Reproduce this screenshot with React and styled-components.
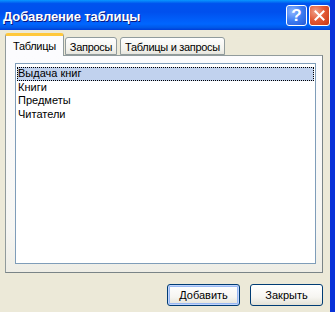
import React from 'react';
import styled, { createGlobalStyle } from 'styled-components';

const Global = createGlobalStyle`
  html, body { margin: 0; padding: 0; background: #ece9d8; }
  body { font-family: "Liberation Sans", Arial, sans-serif; }
`;

const Window = styled.div`
  width: 335px;
  height: 312px;
  display: flex;
  flex-direction: column;
  background: #ece9d8;
  border-right: 5px solid #0831d9;
  box-sizing: border-box;
  overflow: hidden;
`;

const TitleBar = styled.div`
  height: 30px;
  flex: none;
  display: flex;
  align-items: center;
  justify-content: space-between;
  padding: 0 0 0 3px;
  background: linear-gradient(180deg, #0997ff 0%, #0053ee 12%, #0050ee 40%, #0066ff 80%, #0058e8 92%, #003dd7 100%);
`;

const Title = styled.span`
  color: #fff;
  font-family: "Liberation Sans", Arial, sans-serif;
  font-weight: bold;
  font-size: 13px;
  letter-spacing: -0.1px;
  text-shadow: 1px 1px 0 #0a1883;
  margin-top: 2px;
`;

const Caps = styled.div`
  display: flex;
  gap: 2px;
  margin-top: 1px;
`;

const CapButton = styled.div`
  width: 21px;
  height: 21px;
  box-sizing: border-box;
  border: 1px solid #fff;
  border-radius: 3px;
  display: flex;
  align-items: center;
  justify-content: center;
  background: ${p => p.close
    ? 'radial-gradient(circle at 30% 30%, #f0a08a 0%, #e35b37 45%, #c63510 100%)'
    : 'radial-gradient(circle at 30% 30%, #8fb6ff 0%, #3c7cf2 50%, #2457d6 100%)'};
  color: #fff;
  font-family: "Liberation Sans", Arial, sans-serif;
  font-weight: bold;
  font-size: 17px;
  line-height: 1;
`;

const Body = styled.div`
  flex: 1;
  display: flex;
  flex-direction: column;
  padding: 3px 7px 0 5px;
`;

const TabStrip = styled.div`
  display: flex;
  align-items: flex-end;
  height: 22px;
  position: relative;
  z-index: 1;
`;

const Tab = styled.div`
  box-sizing: border-box;
  height: ${p => p.active ? '23px' : '18px'};
  margin-bottom: ${p => p.active ? '-1px' : '0'};
  margin-right: ${p => p.active ? '1px' : '3px'};
  padding: 0 ${p => p.active ? '7px' : '4px'};
  display: flex;
  align-items: center;
  font-family: "Liberation Sans", Arial, sans-serif;
  font-size: 11px;
  letter-spacing: -0.3px;
  color: #000;
  border: 1px solid #919b9c;
  border-bottom: ${p => p.active ? 'none' : '1px solid #919b9c'};
  border-radius: 3px 3px 0 0;
  background: ${p => p.active ? '#fcfcfe' : 'linear-gradient(180deg, #fefefe 0%, #f4f3ee 70%, #e6e5dd 100%)'};
  border-top: ${p => p.active ? '3px solid #ffc83c' : '1px solid #919b9c'};
  padding-top: ${p => p.active ? '0' : '1px'};
`;

const Panel = styled.div`
  box-sizing: border-box;
  width: 318px;
  height: 218px;
  border: 1px solid #919b9c;
  border-right-color: #7a8487;
  border-bottom-color: #7a8487;
  background: linear-gradient(180deg, #fcfcfe 0%, #f6f6f3 80%, #eeede5 100%);
  padding: 7px 6px 8px 9px;
  display: flex;
`;

const List = styled.div`
  flex: 1;
  box-sizing: border-box;
  background: #fff;
  border: 1px solid #7f9db9;
  padding: 3px 1px 1px 1px;
  display: flex;
  flex-direction: column;
`;

const Item = styled.div`
  height: 13.5px;
  box-sizing: border-box;
  padding-left: 1px;
  font-family: "Liberation Sans", Arial, sans-serif;
  font-size: 11px;
  line-height: 13px;
  color: #000;
  background: ${p => p.selected ? '#c1d2ee' : 'transparent'};
  outline: ${p => p.selected ? '1px dotted #000' : 'none'};
  outline-offset: -1px;
`;

const Footer = styled.div`
  display: flex;
  justify-content: flex-end;
  gap: 10px;
  padding: 11px 0 0 0;
`;

const Button = styled.div`
  box-sizing: border-box;
  width: 73px;
  height: 22px;
  border: 1px solid #003c74;
  border-radius: 3px;
  display: flex;
  align-items: center;
  justify-content: center;
  font-family: "Liberation Sans", Arial, sans-serif;
  font-size: 11px;
  color: #000;
  background: linear-gradient(180deg, #ffffff 0%, #f6f5f1 60%, #e3e1d6 100%);
  box-shadow: ${p => p.primary ? 'inset 0 0 0 1px #c2d5fc, inset 0 0 0 2px #98b8f3' : 'none'};
`;

export default function App() {
  return (
    <>
      <Global />
      <Window>
        <TitleBar>
          <Title>Добавление таблицы</Title>
          <Caps>
            <CapButton>?</CapButton>
            <CapButton close>
              <svg width="11" height="11" viewBox="0 0 11 11">
                <path d="M1.5 1.5 L9.5 9.5 M9.5 1.5 L1.5 9.5" stroke="#fff" strokeWidth="2" strokeLinecap="square" />
              </svg>
            </CapButton>
          </Caps>
        </TitleBar>
        <Body>
          <TabStrip>
            <Tab active>Таблицы</Tab>
            <Tab>Запросы</Tab>
            <Tab>Таблицы и запросы</Tab>
          </TabStrip>
          <Panel>
            <List>
              <Item selected>Выдача книг</Item>
              <Item>Книги</Item>
              <Item>Предметы</Item>
              <Item>Читатели</Item>
            </List>
          </Panel>
          <Footer>
            <Button primary>Добавить</Button>
            <Button>Закрыть</Button>
          </Footer>
        </Body>
      </Window>
    </>
  );
}
